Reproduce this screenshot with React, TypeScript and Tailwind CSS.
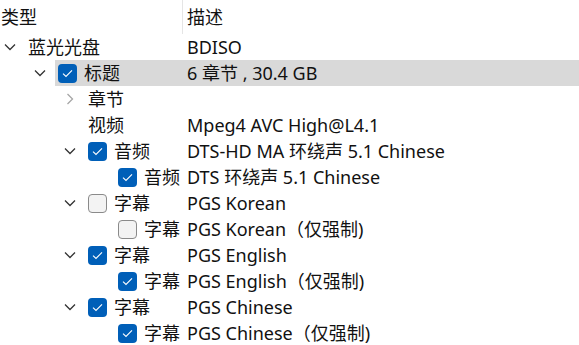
import React from "react";

type Row = {
  level: number;
  label: string;
  desc?: string;
  expander?: "open" | "closed";
  check?: boolean;
  selected?: boolean;
};

const ROWS: Row[] = [
  { level: 0, label: "蓝光光盘", desc: "BDISO", expander: "open" },
  { level: 1, label: "标题", desc: "6 章节 , 30.4 GB", expander: "open", check: true, selected: true },
  { level: 2, label: "章节", expander: "closed" },
  { level: 2, label: "视频", desc: "Mpeg4 AVC High@L4.1" },
  { level: 2, label: "音频", desc: "DTS-HD MA 环绕声 5.1 Chinese", expander: "open", check: true },
  { level: 3, label: "音频", desc: "DTS 环绕声 5.1 Chinese", check: true },
  { level: 2, label: "字幕", desc: "PGS Korean", expander: "open", check: false },
  { level: 3, label: "字幕", desc: "PGS Korean（仅强制)", check: false },
  { level: 2, label: "字幕", desc: "PGS English", expander: "open", check: true },
  { level: 3, label: "字幕", desc: "PGS English（仅强制)", check: true },
  { level: 2, label: "字幕", desc: "PGS Chinese", expander: "open", check: true },
  { level: 3, label: "字幕", desc: "PGS Chinese（仅强制)", check: true },
];

function Chevron({ open }: { open: boolean }) {
  if (open) {
    return (
      <svg width="12" height="8" viewBox="0 0 12 8" className="text-[#333]">
        <path d="M1 1.5 L6 6.5 L11 1.5" fill="none" stroke="currentColor" strokeWidth="1.3" />
      </svg>
    );
  }
  return (
    <svg width="8" height="12" viewBox="0 0 8 12" className="text-[#a6a6a6]">
      <path d="M1.5 1 L6.5 6 L1.5 11" fill="none" stroke="currentColor" strokeWidth="1.3" />
    </svg>
  );
}

function Check({ on }: { on: boolean }) {
  return on ? (
    <div className="w-[19px] h-[19px] rounded-[4px] bg-[#005fb8] flex items-center justify-center shrink-0">
      <svg width="11" height="9" viewBox="0 0 11 9">
        <path d="M1 4.6 L4 7.5 L10 1.3" fill="none" stroke="white" strokeWidth="1.1" />
      </svg>
    </div>
  ) : (
    <div className="w-[19px] h-[19px] rounded-[4px] bg-[#f3f3f3] border border-[#8a8a8a] shrink-0" />
  );
}

export default function App() {
  return (
    <div className="w-[579px] h-[345px] overflow-hidden bg-white text-[18px] leading-none text-[#111] font-['Noto_Sans','Noto_Sans_CJK_SC',sans-serif]">
      {/* header */}
      <div className="flex h-[34px]">
        <div className="w-[183px] border-r border-[#e5e5e5] flex items-center pl-[1px]">类型</div>
        <div className="flex items-center pl-[4px]">描述</div>
      </div>

      {ROWS.map((r, i) => {
        const lead = r.level * 30 + 25;
        return (
          <div key={i} className="flex h-[26px]">
            <div className="flex items-center shrink-0" style={{ width: lead, paddingLeft: r.level * 30 }}>
              <div className="w-[19px] flex items-center justify-center">
                {r.expander && <Chevron open={r.expander === "open"} />}
              </div>
            </div>
            <div className={`flex flex-1 items-center ${r.selected ? "bg-[#d9d9d9]" : ""}`}>
              <div className="flex items-center gap-[7px] pl-[3px] shrink-0 whitespace-nowrap" style={{ width: 187 - lead }}>
                {r.check !== undefined && <Check on={r.check} />}
                <span>{r.label}</span>
              </div>
              <span className="whitespace-nowrap">{r.desc}</span>
            </div>
          </div>
        );
      })}
    </div>
  );
}
